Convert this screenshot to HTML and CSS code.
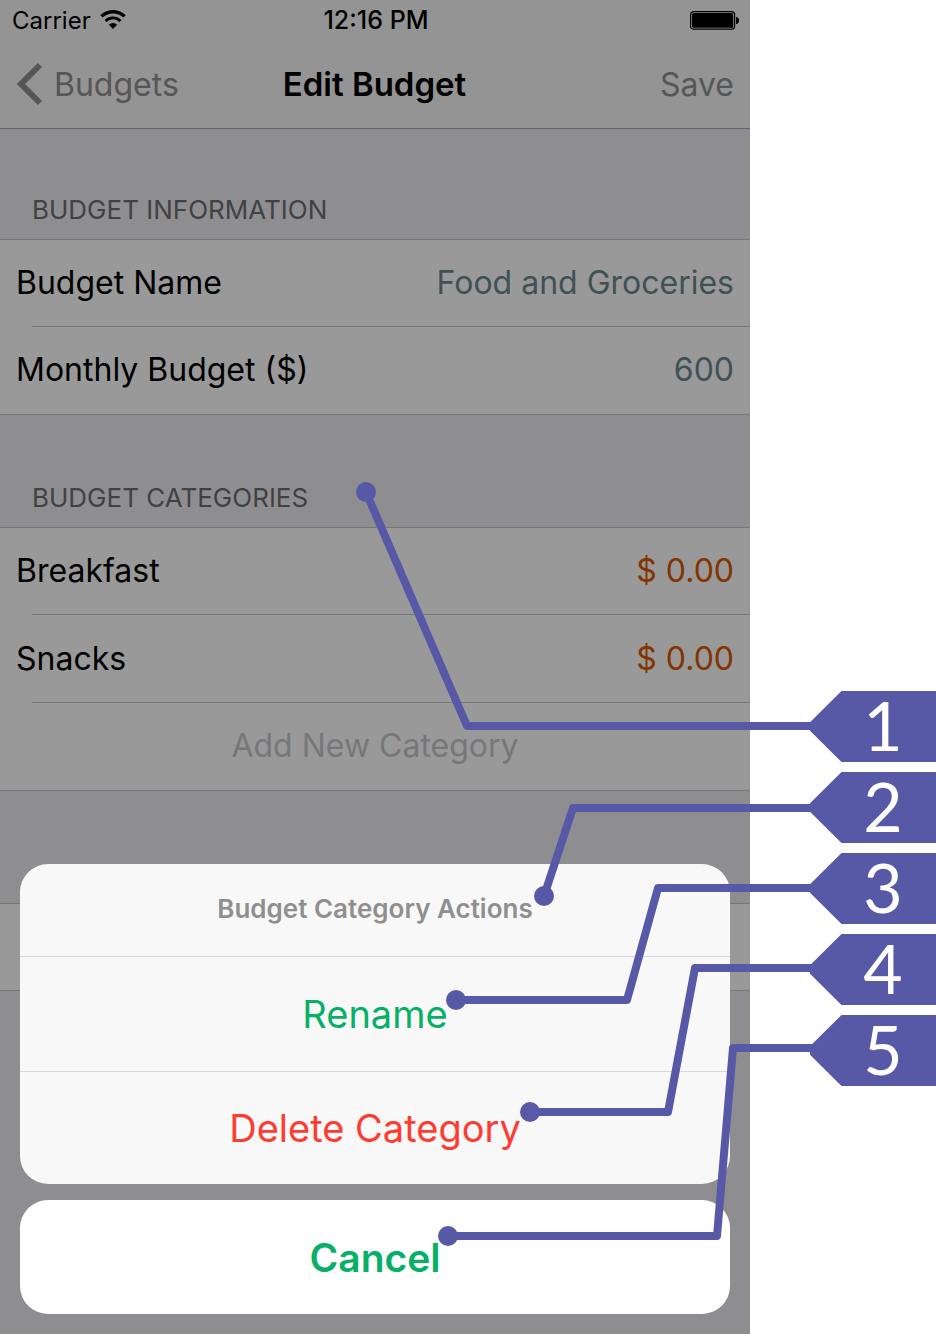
FILE: index.html
```html
<!DOCTYPE html>
<html lang="en">
<head>
<meta charset="utf-8">
<meta name="viewport" content="width=device-width, initial-scale=1">
<title>Edit Budget</title>
<link rel="stylesheet" href="styles.css">
</head>
<body>
<div class="page">
  <main class="phone">
    <div class="statusbar">
      <div class="carrier">
        <span>Carrier</span>
        <svg class="wifi" viewBox="0 0 26 20" width="26" height="20" aria-hidden="true">
          <path d="M1.5 6.4 A16.4 16.4 0 0 1 24.5 6.4" fill="none" stroke="#000" stroke-width="3.4"/>
          <path d="M5.6 10.9 A10.6 10.6 0 0 1 20.4 10.9" fill="none" stroke="#000" stroke-width="2.8"/>
          <path d="M8.8 14.6 Q13 11.6 17.2 14.6 L13 19 Z" fill="#000"/>
        </svg>
      </div>
      <span class="clock">12:16 PM</span>
      <svg class="battery" viewBox="0 0 50 20" width="50" height="20" aria-hidden="true">
        <rect x="0.6" y="1.6" width="44" height="17.6" rx="3" fill="none" stroke="#000" stroke-width="1.2"/>
        <rect x="2" y="3" width="41.2" height="14.8" rx="1.5" fill="#000"/>
        <path d="M46 7 Q49 7.4 49 10.4 Q49 13.6 46 14 Z" fill="#000"/>
      </svg>
    </div>
    <header class="navbar">
      <button class="nav-button" type="button">
        <svg viewBox="0 0 28 44" width="28" height="44" aria-hidden="true"><path d="M25 3 L6 22 L25 41" fill="none" stroke="#565656" stroke-width="6"/></svg>
        <span>Budgets</span>
      </button>
      <h1 class="nav-title">Edit Budget</h1>
      <button class="nav-button nav-save" type="button">Save</button>
    </header>

    <h2 class="group-title first">BUDGET INFORMATION</h2>
    <div class="rows">
      <div class="row">
        <label for="budget-name">Budget Name</label>
        <input class="field" id="budget-name" type="text" value="Food and Groceries">
      </div>
      <div class="row">
        <label for="monthly-budget">Monthly Budget ($)</label>
        <input class="field" id="monthly-budget" type="text" value="600">
      </div>
    </div>

    <h2 class="group-title">BUDGET CATEGORIES</h2>
    <div class="rows">
      <div class="row"><span>Breakfast</span><span class="amount">$ 0.00</span></div>
      <div class="row"><span>Snacks</span><span class="amount">$ 0.00</span></div>
      <button class="row add" type="button">Add New Category</button>
    </div>

    <div class="group-gap"></div>
    <div class="rows"><div class="row"></div></div>

    <div class="sheet" role="dialog" aria-labelledby="sheet-title">
      <div class="sheet-card">
        <h2 class="sheet-title" id="sheet-title">Budget Category Actions</h2>
        <button class="action" type="button">Rename</button>
        <button class="action danger" type="button">Delete Category</button>
      </div>
      <button class="cancel" type="button">Cancel</button>
    </div>
  </main>

  <ol class="tags">
    <li class="tag">1</li>
    <li class="tag">2</li>
    <li class="tag">3</li>
    <li class="tag">4</li>
    <li class="tag">5</li>
  </ol>

  <svg class="leaders" viewBox="0 0 936 1334" preserveAspectRatio="none" aria-hidden="true">
    <g fill="none" stroke="#5759a7" stroke-width="8" stroke-linejoin="round">
      <path d="M366 492 L467 726 H814"/>
      <path d="M544 896 L573 808 H814"/>
      <path d="M456 1000 H627 L658 888 H814"/>
      <path d="M530 1112 H668 L695 968 H814"/>
      <path d="M448 1236 H717 L733 1048 H814"/>
    </g>
    <g fill="#5759a7">
      <circle cx="366" cy="492" r="10"/>
      <circle cx="544" cy="896" r="10"/>
      <circle cx="456" cy="1000" r="10"/>
      <circle cx="530" cy="1112" r="10"/>
      <circle cx="448" cy="1236" r="10"/>
    </g>
  </svg>
</div>
</body>
</html>
```
FILE: styles.css
```css
* {
  box-sizing: border-box;
}

body {
  margin: 0;
  background: #fff;
  color: #000;
  font-family: Inter, "Liberation Sans", sans-serif;
  font-size: 32px;
}

h1,
h2,
ol {
  margin: 0;
  padding: 0;
}

button,
input {
  margin: 0;
  padding: 0;
  border: 0;
  background: none;
  color: inherit;
  font: inherit;
}

.page {
  position: relative;
  display: grid;
  grid-template-columns: minmax(0, 1fr) 186px;
  min-height: 100vh;
}

.phone {
  position: relative;
  padding-bottom: 343px;
  background: #8e8e91;
}

.statusbar,
.navbar {
  display: grid;
  grid-template-columns: 1fr auto 1fr;
  align-items: center;
  background: #949494;
}

.statusbar {
  height: 40px;
  padding: 0 10px 0 12px;
  font-size: 24px;
}

.carrier {
  display: flex;
  align-items: center;
  gap: 9px;
}

.clock {
  font-size: 25px;
  font-weight: 500;
}

.battery {
  justify-self: end;
}

.navbar {
  height: 89px;
  padding: 0 16px 0 15px;
  border-bottom: 1px solid #68686a;
}

.nav-button {
  display: flex;
  align-items: center;
  justify-self: start;
  gap: 11px;
  color: #565656;
}

.nav-save {
  justify-self: end;
}

.nav-title {
  font-size: 33px;
  font-weight: 600;
}

.group-title,
.group-gap {
  height: 112px;
}

.group-title {
  display: flex;
  align-items: flex-end;
  padding: 0 32px 14px;
  color: #414144;
  font-size: 26px;
  font-weight: 400;
  line-height: 30px;
}

.group-title.first {
  height: 110px;
}

.rows {
  border-bottom: 1px solid #767678;
  background: linear-gradient(#767678, #767678) top / 100% 1px no-repeat #999;
}

.row {
  display: flex;
  align-items: center;
  justify-content: space-between;
  gap: 16px;
  width: 100%;
  height: 88px;
  padding: 0 16px 2px;
  background: linear-gradient(#767678, #767678) 32px 100% / 100% 1px no-repeat;
}

.row:last-child {
  height: 87px;
  background: none;
}

.field {
  flex: 1;
  min-width: 0;
  color: #405155;
  text-align: right;
}

.amount {
  color: #833400;
}

.add {
  justify-content: center;
  color: #77777a;
}

.sheet {
  position: absolute;
  right: 20px;
  bottom: 20px;
  left: 20px;
  display: grid;
  gap: 16px;
  text-align: center;
}

.sheet-card,
.cancel {
  overflow: hidden;
  border-radius: 28px;
}

.sheet-card {
  background: #f8f8f8;
}

.sheet-title {
  height: 92px;
  color: #8f8f8f;
  font-size: 26px;
  font-weight: 600;
  line-height: 90px;
}

.action {
  display: block;
  width: 100%;
  height: 115px;
  border-top: 1px solid #d8d8dc;
  color: #06b067;
  font-size: 38px;
}

.danger {
  height: 113px;
  color: #ff3b30;
}

.cancel {
  height: 114px;
  background: #fff;
  color: #06b067;
  font-size: 39px;
  font-weight: 600;
}

.tags {
  display: flex;
  flex-direction: column;
  align-items: flex-end;
  gap: 10px;
  padding-top: 691px;
  list-style: none;
}

.tag {
  width: 126px;
  height: 71px;
  padding-left: 20px;
  background: #5759a7;
  clip-path: polygon(0 44%, 25% 0, 100% 0, 100% 100%, 25% 100%, 0 56%);
  color: #fff;
  font-family: Lato, "Liberation Sans", sans-serif;
  font-size: 68px;
  line-height: 68px;
  text-align: center;
}

.leaders {
  position: absolute;
  inset: 0;
  width: 100%;
  height: 100%;
  pointer-events: none;
}
```
